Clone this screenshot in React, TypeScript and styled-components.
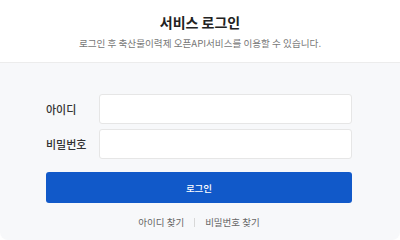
import React from "react";
import styled, { createGlobalStyle } from "styled-components";

const Global = createGlobalStyle`
  html, body { margin: 0; padding: 0; background: #ffffff; }
  body { font-family: "Noto Sans CJK KR", "Noto Sans", sans-serif; }
  * { box-sizing: border-box; }
`;

const Card = styled.div`
  width: 400px;
  height: 240px;
  display: flex;
  flex-direction: column;
  background: #ffffff;
`;

const Header = styled.header`
  height: 63px;
  border-bottom: 1px solid #ececec;
  display: flex;
  flex-direction: column;
  align-items: center;
  padding-top: 12px;
`;

const Title = styled.h1`
  margin: 0;
  font-size: 14px;
  line-height: 20px;
  font-weight: 700;
  color: #222222;
`;

const Subtitle = styled.p`
  margin: 4px 0 0;
  font-size: 9.6px;
  line-height: 14px;
  color: #777777;
`;

const Body = styled.main`
  flex: 1;
  background: #f7f8fa;
  border-radius: 0 0 8px 8px;
  padding: 31px 48px 0 46px;
  display: flex;
  flex-direction: column;
`;

const Row = styled.div`
  display: flex;
  align-items: center;
  & + & { margin-top: 5px; }
`;

const Label = styled.label`
  width: 53px;
  font-size: 11px;
  font-weight: 500;
  color: #333333;
`;

const Input = styled.input`
  width: 253px;
  height: 30px;
  border: 1px solid #e6e6e6;
  border-radius: 3px;
  background: #ffffff;
  outline: none;
`;

const Button = styled.button`
  margin-top: 13px;
  width: 306px;
  height: 31px;
  border: none;
  border-radius: 3px;
  background: #1159c9;
  color: #ffffff;
  font-family: inherit;
  font-size: 9.5px;
  font-weight: 500;
`;

const Links = styled.nav`
  margin-top: 12px;
  width: 306px;
  display: flex;
  justify-content: center;
  align-items: center;
  gap: 10px;
  font-size: 9.5px;
  color: #666666;
`;

const Sep = styled.span`
  width: 1px;
  height: 9px;
  background: #d8d8d8;
`;

export default function App() {
  return (
    <Card>
      <Global />
      <Header>
        <Title>서비스 로그인</Title>
        <Subtitle>로그인 후 축산물이력제 오픈API서비스를 이용할 수 있습니다.</Subtitle>
      </Header>
      <Body>
        <Row>
          <Label>아이디</Label>
          <Input />
        </Row>
        <Row>
          <Label>비밀번호</Label>
          <Input type="password" />
        </Row>
        <Button>로그인</Button>
        <Links>
          <span>아이디 찾기</span>
          <Sep />
          <span>비밀번호 찾기</span>
        </Links>
      </Body>
    </Card>
  );
}
